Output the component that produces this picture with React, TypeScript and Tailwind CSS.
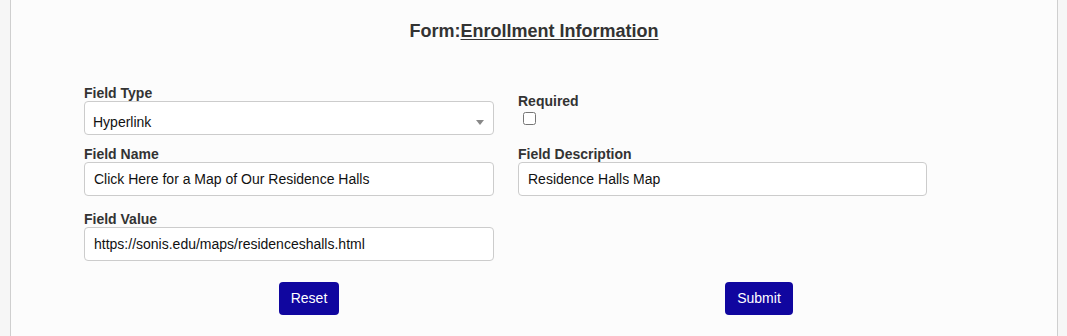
import React from "react";

const font = { fontFamily: '"Liberation Sans", Arial, sans-serif' };

function Label({ children }: { children: React.ReactNode }) {
  return (
    <div className="h-[16px] leading-[16px] text-[14px] font-bold text-[#333]">{children}</div>
  );
}

function TextBox({ value, w }: { value: string; w: string }) {
  return (
    <div
      className={`${w} h-[34px] rounded-[4px] border border-[#ccc] bg-white pl-[9px] flex items-center text-[14px] text-[#111]`}
    >
      {value}
    </div>
  );
}

export default function App() {
  return (
    <div style={font} className="w-[1067px] h-[336px] bg-[#f6f6f6] pl-[10px] pr-[9px] overflow-hidden">
      <div className="h-[336px] border-x border-[#cfcfcf] bg-[#fcfcfc] pt-[21px]">
        <h1 className="h-[20px] leading-[20px] text-[18px] font-bold text-[#333] text-center">
          Form:<span className="underline underline-offset-[2px]">Enrollment Information</span>
        </h1>
        <div className="mt-[44px] pl-[73px]">
          <div className="flex gap-[24px]">
            <div className="w-[410px]">
              <Label>Field Type</Label>
              <div className="h-[34px] rounded-[4px] border border-[#ccc] bg-white pl-[8px] pr-[9px] pt-[9px] flex items-center justify-between text-[14px] text-[#111]">
                <span>Hyperlink</span>
                <svg width="8" height="5" viewBox="0 0 8 5">
                  <path d="M0 0 L8 0 L4 5 Z" fill="#888" />
                </svg>
              </div>
            </div>
            <div className="w-[409px] pt-[8px]">
              <Label>Required</Label>
              <input type="checkbox" className="block ml-[5px] mt-[3px] w-[13px] h-[13px]" />
            </div>
          </div>
          <div className="flex gap-[24px] mt-[11px]">
            <div className="w-[410px]">
              <Label>Field Name</Label>
              <TextBox w="w-[410px]" value="Click Here for a Map of Our Residence Halls" />
            </div>
            <div className="w-[409px]">
              <Label>Field Description</Label>
              <TextBox w="w-[409px]" value="Residence Halls Map" />
            </div>
          </div>
          <div className="mt-[15px] w-[410px]">
            <Label>Field Value</Label>
            <TextBox w="w-[410px]" value="https://sonis.edu/maps/residenceshalls.html" />
          </div>
          <div className="mt-[21px] w-[900px] flex">
            <div className="w-[450px] flex justify-center">
              <button className="h-[33px] px-[12px] rounded-[4px] bg-[#10069f] text-white text-[14px]">
                Reset
              </button>
            </div>
            <div className="w-[450px] flex justify-center">
              <button className="h-[33px] px-[12px] rounded-[4px] bg-[#10069f] text-white text-[14px]">
                Submit
              </button>
            </div>
          </div>
        </div>
      </div>
    </div>
  );
}
